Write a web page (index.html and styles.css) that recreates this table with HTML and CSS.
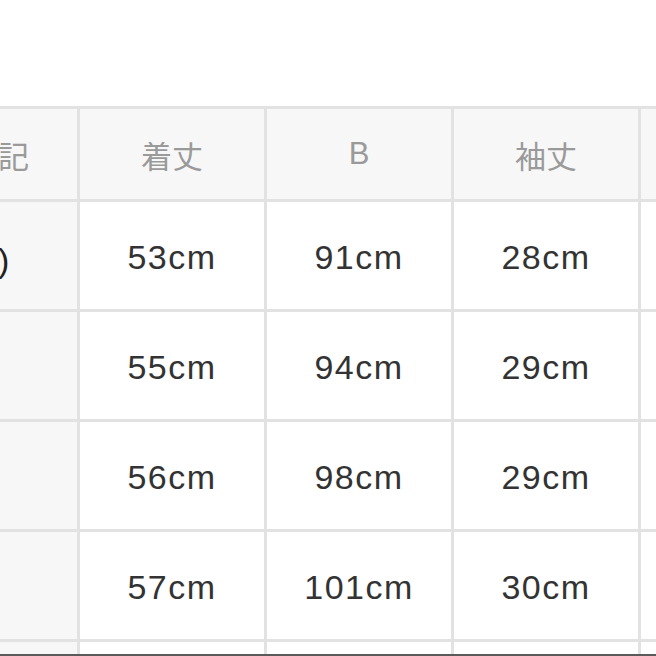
FILE: index.html
```html
<!DOCTYPE html>
<html lang="ja">
<head>
<meta charset="utf-8">
<link rel="stylesheet" href="styles.css">
</head>
<body>
<div class="page">
  <div class="sheet">
    <div class="cell head corner">サイズ表記</div>
    <div class="cell head">着丈</div>
    <div class="cell head">B</div>
    <div class="cell head">袖丈</div>
    <div class="cell head">肩幅</div>

    <div class="cell label">S(7号)</div>
    <div class="cell">53cm</div>
    <div class="cell">91cm</div>
    <div class="cell">28cm</div>
    <div class="cell">36cm</div>

    <div class="cell label">M</div>
    <div class="cell">55cm</div>
    <div class="cell">94cm</div>
    <div class="cell">29cm</div>
    <div class="cell">37cm</div>

    <div class="cell label">L</div>
    <div class="cell">56cm</div>
    <div class="cell">98cm</div>
    <div class="cell">29cm</div>
    <div class="cell">38cm</div>

    <div class="cell label">LL</div>
    <div class="cell">57cm</div>
    <div class="cell">101cm</div>
    <div class="cell">30cm</div>
    <div class="cell">39cm</div>

    <div class="cell label">3L</div>
    <div class="cell">58cm</div>
    <div class="cell">105cm</div>
    <div class="cell">30cm</div>
    <div class="cell">40cm</div>
  </div>
  <div class="edge"></div>
</div>
</body>
</html>
```

FILE: styles.css
```css
html, body {
  margin: 0;
  padding: 0;
  background: #ffffff;
}
.page {
  width: 656px;
  height: 656px;
  overflow: hidden;
  position: relative;
  font-family: "Liberation Sans", "Noto Sans CJK JP", sans-serif;
}
.sheet {
  display: grid;
  grid-template-columns: 238px 184px 184px 184px 184px;
  grid-template-rows: 90px repeat(5, 107px);
  gap: 3px;
  padding-top: 3px;
  background: #e2e2e2;
  width: max-content;
  margin-top: 106px;
  margin-left: -161px;
}
.cell {
  background: #ffffff;
  display: flex;
  align-items: center;
  justify-content: center;
  padding-top: 4px;
  box-sizing: border-box;
  font-size: 34px;
  letter-spacing: 1.5px;
  color: #333333;
  white-space: nowrap;
}
.head {
  background: #f7f7f7;
  color: #9a9a9a;
  font-size: 31px;
  letter-spacing: 0;
  padding-top: 0;
}
.corner {
  padding-right: 12px;
}
.label {
  background: #f7f7f7;
  color: #222222;
}
.edge {
  position: absolute;
  left: 0;
  right: 0;
  bottom: 0;
  height: 2px;
  background: #5a5a5a;
}
```
